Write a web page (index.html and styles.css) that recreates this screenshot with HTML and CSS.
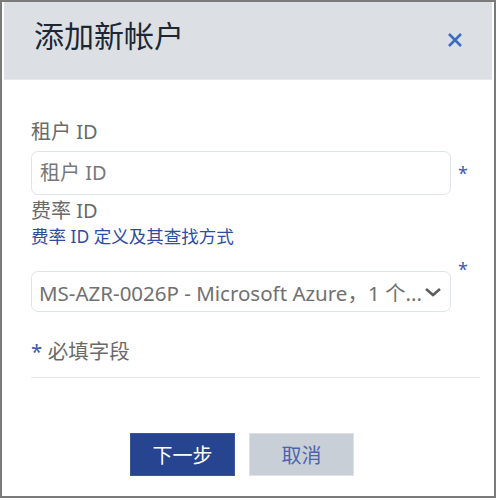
FILE: index.html
```html
<!DOCTYPE html>
<html lang="zh-CN">
<head>
<meta charset="utf-8">
<link rel="stylesheet" href="styles.css">
</head>
<body>
<div class="dialog">
  <div class="header">
    <h1 class="title">添加新帐户</h1>
    <span class="close" aria-label="关闭">
      <svg width="16" height="16" viewBox="0 0 16 16"><path d="M2 2 L14 14 M14 2 L2 14" stroke="#3a6cc0" stroke-width="2.6" stroke-linecap="butt"/></svg>
    </span>
  </div>
  <div class="body">
    <div class="label">租户 ID</div>
    <div class="row">
      <div class="input placeholder">租户 ID</div>
      <span class="req">*</span>
    </div>
    <div class="label label2">费率 ID</div>
    <a class="link">费率 ID 定义及其查找方式</a>
    <div class="row row-select">
      <div class="select">
        <span class="select-text">MS-AZR-0026P - Microsoft Azure，1 个...</span>
        <svg class="chev" width="18" height="10" viewBox="0 0 18 10"><path d="M2 2 L9 8 L16 2" fill="none" stroke="#5d5d5d" stroke-width="2.6"/></svg>
      </div>
      <span class="req req-top">*</span>
    </div>
    <div class="note"><span class="note-star">*</span> 必填字段</div>
    <div class="divider"></div>
    <div class="actions">
      <button class="btn btn-primary">下一步</button>
      <button class="btn btn-secondary">取消</button>
    </div>
  </div>
</div>
</body>
</html>
```
FILE: styles.css
```css
html, body {
  margin: 0;
  padding: 0;
  background: #ffffff;
}
body {
  font-family: "Noto Sans", "Noto Sans CJK SC", sans-serif;
}
.dialog {
  box-sizing: border-box;
  width: 496px;
  height: 498px;
  border: 2px solid #7b7b7b;
  background: #fff;
}
.header {
  margin: 0 2px;
  height: 77px;
  background: #dce0e4;
  border-bottom: 1px solid #e6e9ec;
  display: flex;
  align-items: flex-start;
  justify-content: space-between;
}
.title {
  margin: 10px 0 0 30px;
  font-family: "Noto Sans CJK SC", sans-serif;
  font-weight: 400;
  font-size: 30px;
  line-height: 44px;
  color: #1d2733;
}
.close {
  margin: 30px 29px 0 0;
  display: flex;
  width: 16px;
  height: 16px;
}
.body {
  padding: 0 0 0 29px;
}
.label {
  margin-top: 38px;
  font-size: 20px;
  line-height: 28px;
  color: #6a6a6a;
}
.row {
  display: flex;
  align-items: center;
  margin-top: 5px;
}
.input {
  box-sizing: border-box;
  width: 420px;
  height: 44px;
  border: 1px solid #dfe3ea;
  border-radius: 7px;
  padding: 0 8px;
  font-size: 20px;
  line-height: 42px;
  color: #787878;
}
.req {
  margin-left: 7px;
  color: #3f5bab;
  font-size: 18px;
  line-height: 20px;
  align-self: center;
}
.label2 {
  margin-top: 2px;
}
.link {
  display: block;
  font-size: 17.5px;
  line-height: 22px;
  color: #2e4ca3;
  text-decoration: none;
}
.row-select {
  margin-top: 16px;
  align-items: flex-start;
}
.select {
  box-sizing: border-box;
  width: 420px;
  height: 41px;
  margin-top: 8px;
  border: 1px solid #dfe3ea;
  border-radius: 7px;
  padding: 0 8px 0 7px;
  display: flex;
  align-items: center;
  justify-content: space-between;
}
.select-text {
  font-size: 20.5px;
  color: #707070;
  white-space: nowrap;
  overflow: hidden;
}
.chev {
  flex: none;
}
.req-top {
  margin-top: -4px;
  align-self: flex-start;
}
.note {
  margin-top: 25px;
  font-size: 20.5px;
  line-height: 28px;
  color: #6a6a6a;
}
.note-star {
  color: #3f5bab;
}
.divider {
  margin-top: 12px;
  width: 449px;
  height: 1px;
  background: #e3e7ec;
}
.actions {
  display: flex;
  gap: 14px;
  margin-top: 55px;
  padding-left: 99px;
}
.btn {
  box-sizing: border-box;
  width: 105px;
  height: 43px;
  border: 1px solid transparent;
  font-family: "Noto Sans CJK SC", sans-serif;
  font-size: 20px;
  padding: 0;
}
.btn-primary {
  background: #26448f;
  border-color: #3a5598;
  color: #ffffff;
}
.btn-secondary {
  background: #c9cfd6;
  border-color: #dde1e6;
  color: #4a64b0;
}
```
